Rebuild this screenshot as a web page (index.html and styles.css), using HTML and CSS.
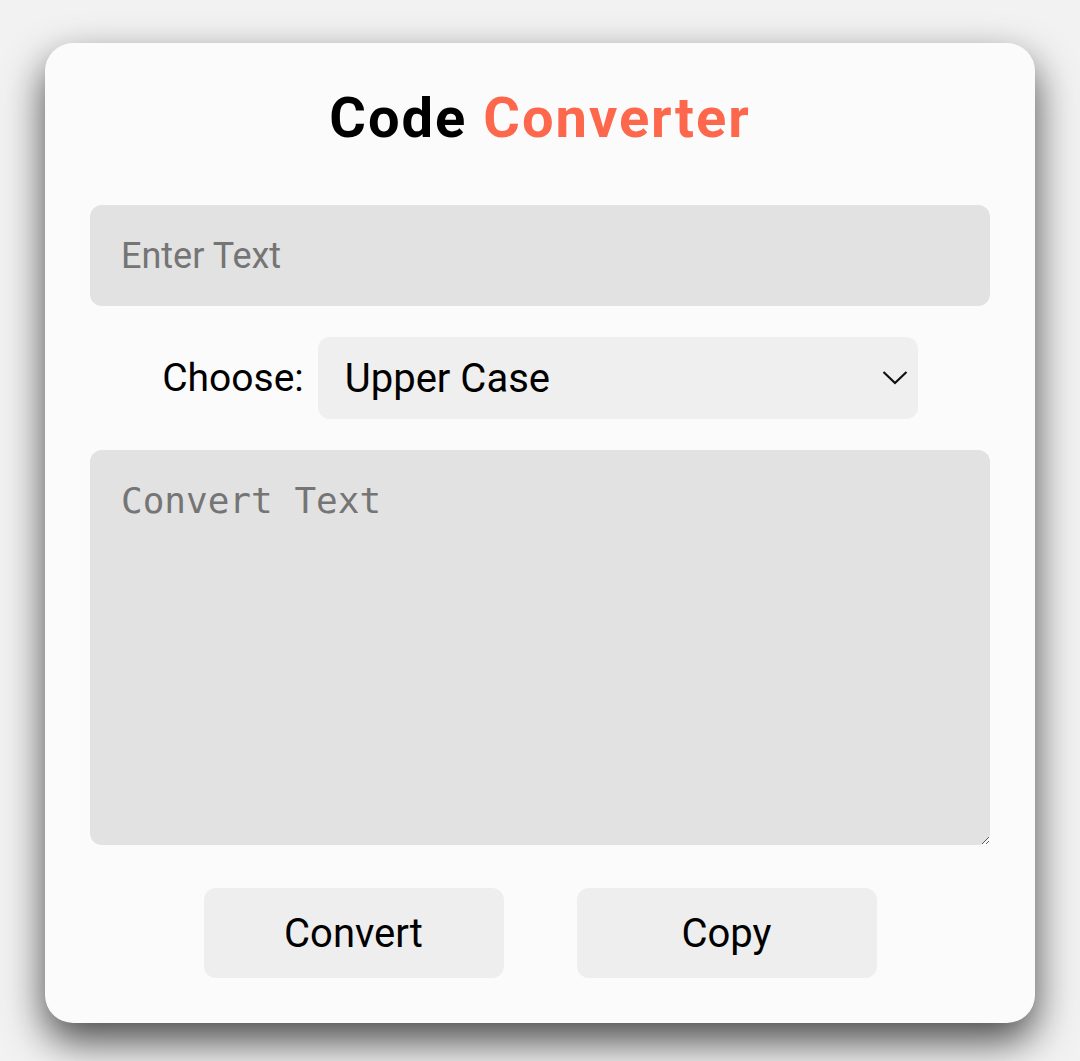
FILE: index.html
```html
<!DOCTYPE html>
<html>
<head>
<meta charset="utf-8">
<link rel="stylesheet" href="styles.css">
</head>
<body>
<main class="card">
  <h1 class="title">Code <span class="accent">Converter</span></h1>
  <input class="text-input" type="text" placeholder="Enter Text">
  <div class="choose-row">
    <label class="choose-label" for="mode">Choose:</label>
    <div class="select-wrap">
      <select id="mode" class="select">
        <option>Upper Case</option>
        <option>Lower Case</option>
      </select>
      <svg class="chevron" width="26" height="16" viewBox="0 0 26 16"><path d="M1.5 2 L13 13 L24.5 2" fill="none" stroke="#111" stroke-width="2.2"/></svg>
    </div>
  </div>
  <textarea class="output" placeholder="Convert Text"></textarea>
  <div class="buttons">
    <button class="btn">Convert</button>
    <button class="btn">Copy</button>
  </div>
</main>
</body>
</html>
```
FILE: styles.css
```css
html, body {
  margin: 0;
  padding: 0;
}
body {
  background: #f2f2f2;
  font-family: Roboto, "Liberation Sans", sans-serif;
  padding-top: 43px;
  height: 1061px;
  box-sizing: border-box;
  overflow: hidden;
}
.card {
  width: 990px;
  height: 980px;
  margin: 0 auto;
  background: #fbfbfb;
  border-radius: 28px;
  box-shadow: 0 18px 40px rgba(0, 0, 0, 0.7);
  box-sizing: border-box;
  padding: 0 45px;
  display: flex;
  flex-direction: column;
}
.title {
  margin: 47px 0 0;
  text-align: center;
  font-family: Roboto, sans-serif;
  font-weight: 700;
  font-size: 56px;
  line-height: 56px;
  letter-spacing: 2px;
  color: #000;
}
.accent {
  color: #fd674c;
}
.text-input {
  margin-top: 59px;
  width: 100%;
  height: 101px;
  box-sizing: border-box;
  border: none;
  outline: none;
  border-radius: 12px;
  background: #e2e2e2;
  padding: 0 31px;
  font-family: Roboto, sans-serif;
  font-size: 36px;
  color: #000;
}
.text-input::placeholder {
  color: #757575;
}
.choose-row {
  margin-top: 31px;
  display: flex;
  justify-content: center;
  align-items: center;
  gap: 14px;
}
.choose-label {
  font-size: 39px;
  color: #000;
}
.select-wrap {
  position: relative;
  width: 600px;
  height: 82px;
}
.select {
  appearance: none;
  -webkit-appearance: none;
  width: 100%;
  height: 100%;
  border: none;
  outline: none;
  border-radius: 12px;
  background: #efefef;
  padding: 0 27px;
  font-family: Roboto, sans-serif;
  font-size: 40px;
  color: #000;
}
.chevron {
  position: absolute;
  right: 10px;
  top: 33px;
  pointer-events: none;
}
.output {
  margin-top: 31px;
  width: 100%;
  height: 395px;
  box-sizing: border-box;
  border: none;
  outline: none;
  border-radius: 12px;
  background: #e2e2e2;
  padding: 30px 31px;
  font-family: "DejaVu Sans Mono", monospace;
  font-size: 36px;
  resize: vertical;
}
.output::placeholder {
  color: #757575;
}
.buttons {
  margin-top: 43px;
  display: flex;
  justify-content: center;
  gap: 73px;
}
.btn {
  width: 300px;
  height: 90px;
  border: none;
  border-radius: 12px;
  background: #eeeeee;
  font-family: Roboto, sans-serif;
  font-size: 40px;
  color: #000;
}
```
